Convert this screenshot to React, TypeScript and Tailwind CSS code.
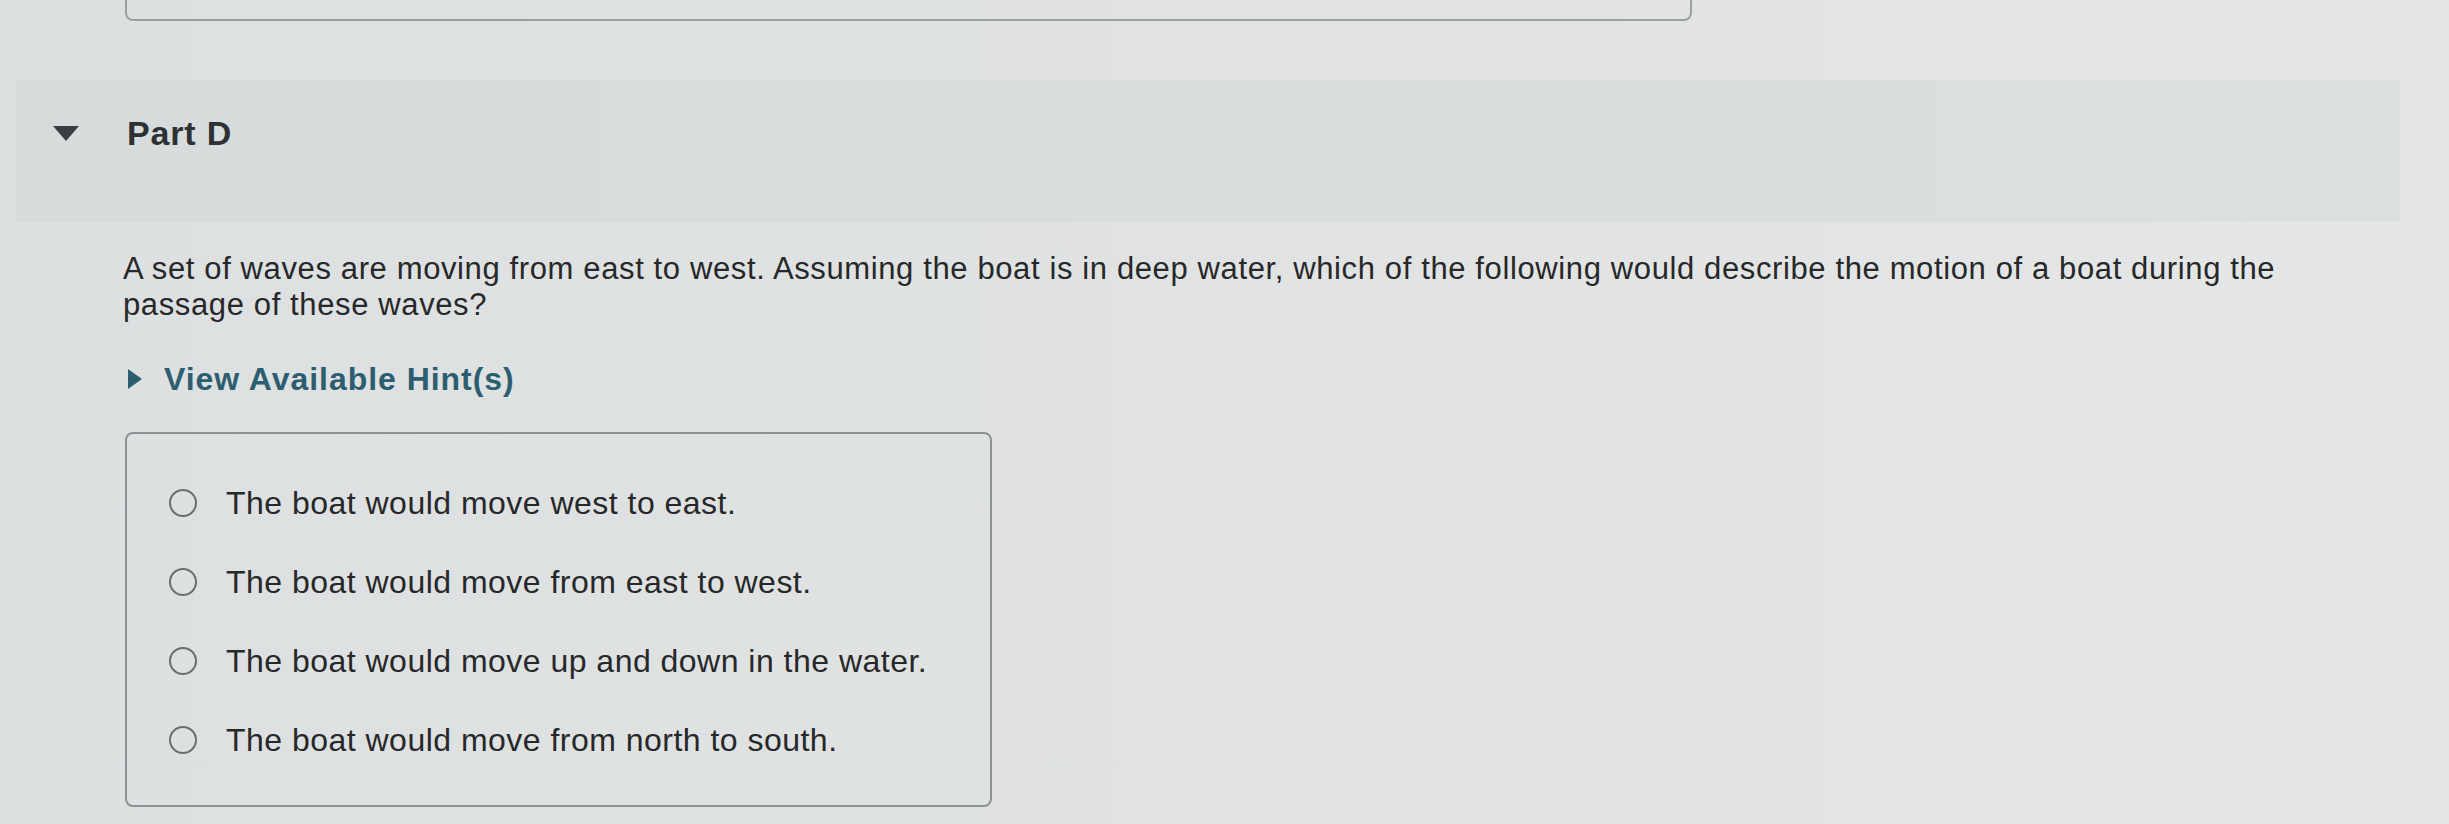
import React from "react"

const options = [
  "The boat would move west to east.",
  "The boat would move from east to west.",
  "The boat would move up and down in the water.",
  "The boat would move from north to south.",
]

export default function App() {
  return (
    <div
      className="w-[2449px] h-[824px] overflow-hidden flex flex-col bg-gradient-to-r from-[#dde0e0] via-[#e1e3e3] to-[#e5e7e7] text-[#262829]"
      style={{ fontFamily: '"Liberation Sans", Arial, sans-serif' }}
    >
      {/* previous part's box, cut off at the top */}
      <div className="ml-[125px] w-[1567px] h-[21px] shrink-0 border-x-2 border-b-2 border-[#9c9fa0] rounded-b-lg" />

      {/* Part D header */}
      <div className="mt-[59px] ml-[16px] w-[2384px] h-[142px] shrink-0 flex items-start pt-[33px] bg-gradient-to-r from-[#d8dbdb] to-[#dcdfdf]">
        <div className="ml-[37px] mt-[13px] w-0 h-0 border-l-[13px] border-r-[13px] border-t-[15px] border-l-transparent border-r-transparent border-t-[#3b3e41]" />
        <h2 className="ml-[48px] text-[34px] leading-[40px] font-bold tracking-[0.025em] text-[#2e3134]">Part D</h2>
      </div>

      {/* question */}
      <p className="mt-[29px] ml-[123px] w-[2240px] text-[31px] leading-[36px] tracking-[0.02em]">
        A set of waves are moving from east to west. Assuming the boat is in deep water, which of the following would describe the motion of a boat during the passage of these waves?
      </p>

      {/* hints */}
      <div className="mt-[38px] ml-[128px] h-[36px] flex items-center">
        <div className="w-0 h-0 border-t-[10px] border-b-[10px] border-l-[14px] border-t-transparent border-b-transparent border-l-[#2d5e70]" />
        <span className="ml-[22px] text-[32px] font-bold tracking-[0.03em] text-[#2d5e70]">View Available Hint(s)</span>
      </div>

      {/* answer choices */}
      <div className="mt-[35px] ml-[125px] w-[867px] h-[375px] shrink-0 border-2 border-[#8e9193] rounded-lg pt-[29px] pl-[42px]">
        {options.map((o) => (
          <label key={o} className="h-[79px] flex items-center">
            <span className="w-[28px] h-[28px] shrink-0 rounded-full border-2 border-[#6b6e70]" />
            <span className="ml-[29px] text-[32px] leading-[40px] tracking-[0.015em] text-[#262829]">{o}</span>
          </label>
        ))}
      </div>
    </div>
  )
}
